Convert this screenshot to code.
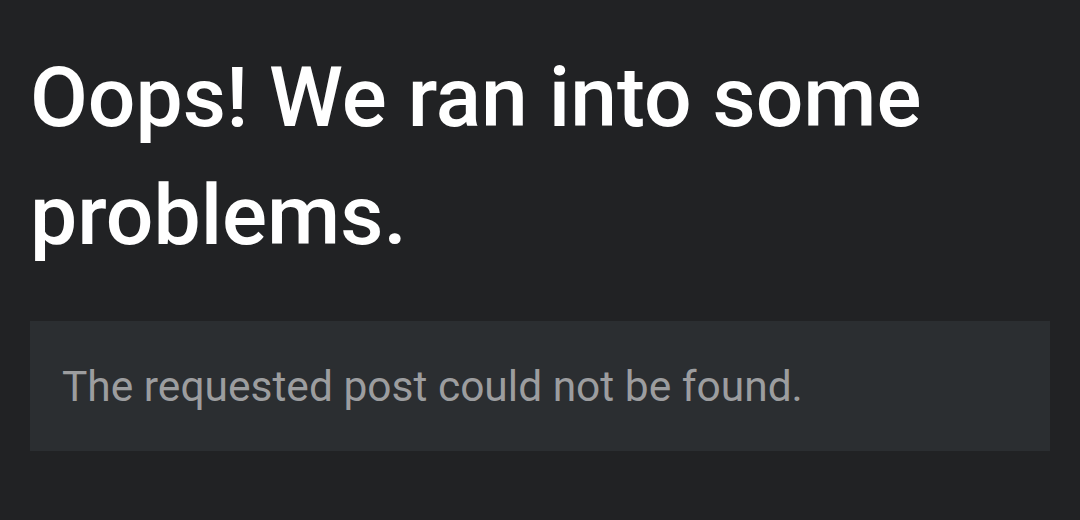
export default function App() {
  return (
    <div
      className="min-h-[520px] bg-[#212224] px-[30px] pt-[39px]"
      style={{ fontFamily: "Roboto, 'Noto Sans', sans-serif" }}
    >
      <h1 className="text-[84px] leading-[118px] font-medium text-white">
        Oops! We ran into some problems.
      </h1>
      <div className="mt-[46px] bg-[#2b2e31] px-[32px] pt-[33px] pb-[31px]">
        <p className="text-[42.5px] leading-[66px] text-[#9c9d9f]">
          The requested post could not be found.
        </p>
      </div>
    </div>
  );
}
